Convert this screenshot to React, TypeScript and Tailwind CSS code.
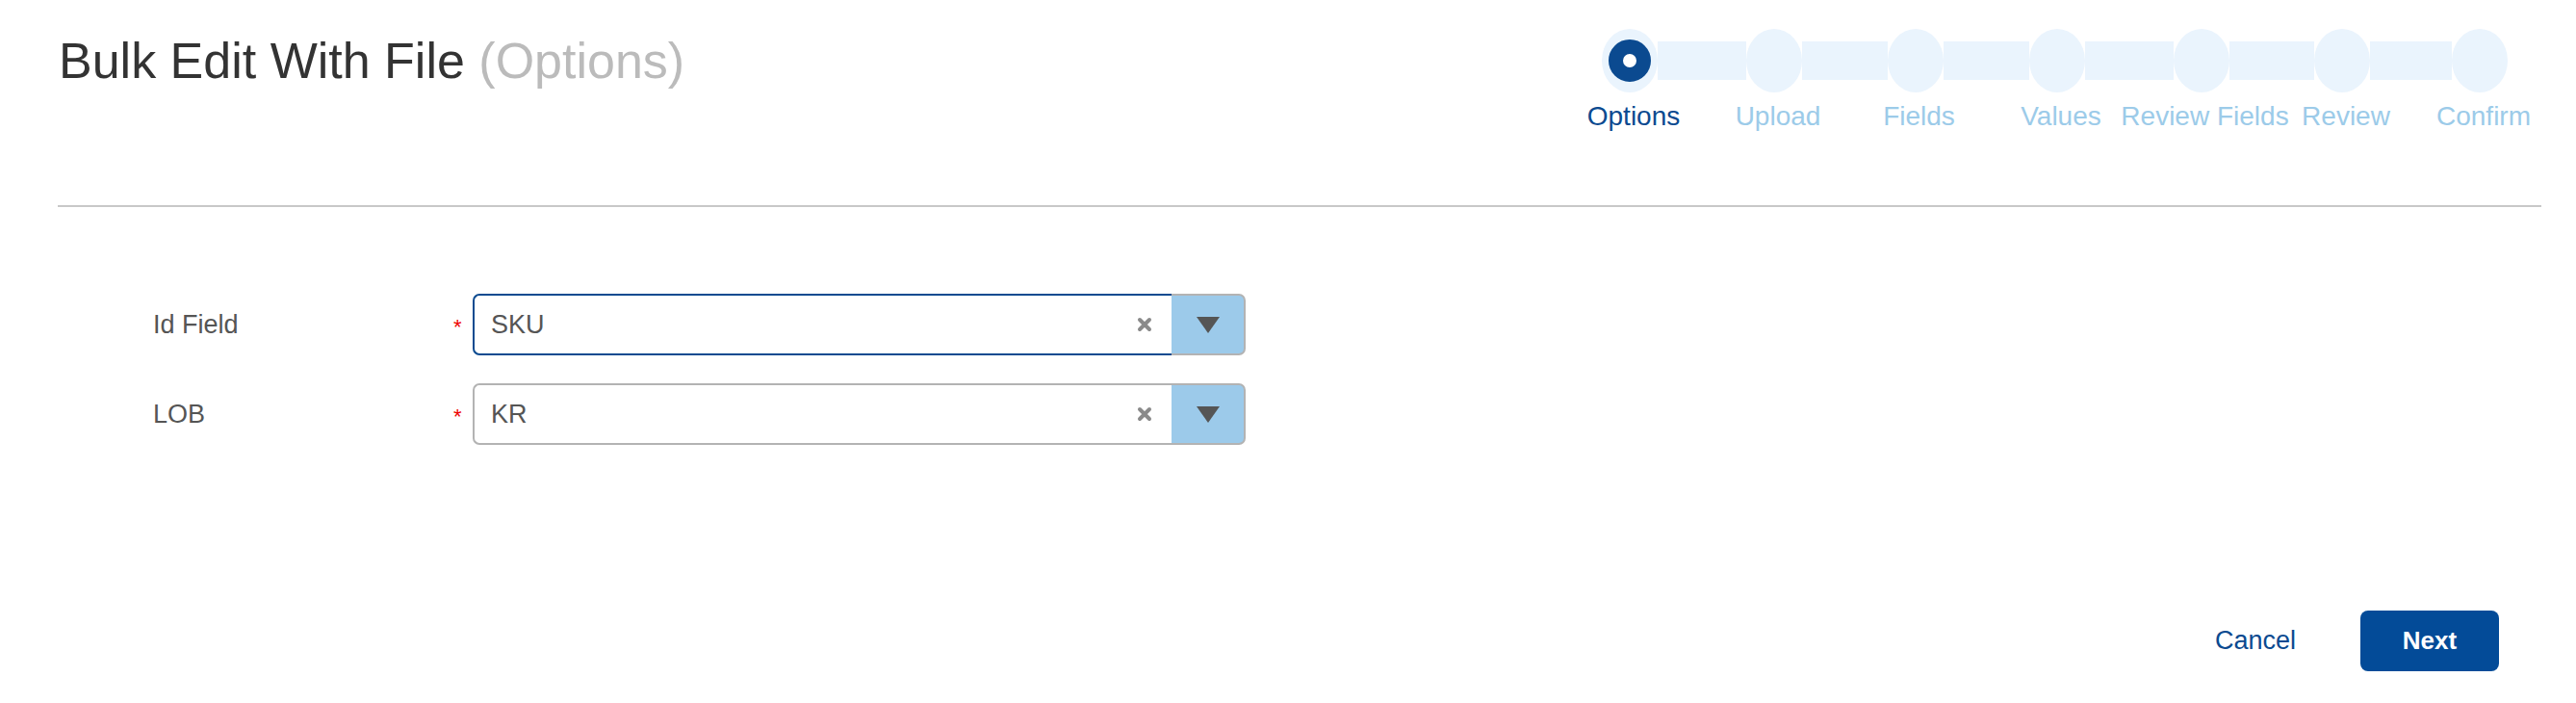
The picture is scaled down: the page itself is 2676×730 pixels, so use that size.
import React from "react";

const steps = [
  { label: "Options", w: 152 },
  { label: "Upload", w: 148 },
  { label: "Fields", w: 145 },
  { label: "Values", w: 150 },
  { label: "Review Fields", w: 149 },
  { label: "Review", w: 144 },
  { label: "Confirm", w: 142 },
];

function Stepper() {
  return (
    <div className="flex mt-[30px]">
      {steps.map((s, i) => (
        <div key={s.label} className="flex flex-col items-center" style={{ width: s.w }}>
          <div className="flex items-center w-full h-[66px]">
            <div className={`flex-1 h-[40px] ${i > 0 ? "bg-[#eaf4fd]" : ""}`} />
            <div className="w-[58px] h-[66px] rounded-[50%] bg-[#eaf4fd] flex items-center justify-center shrink-0">
              {i === 0 && (
                <div className="w-[44px] h-[44px] rounded-full border-[15px] border-[#0b4a90] bg-white shrink-0" />
              )}
            </div>
            <div className={`flex-1 h-[40px] ${i < steps.length - 1 ? "bg-[#eaf4fd]" : ""}`} />
          </div>
          <div
            className={`mt-[9px] ml-[8px] whitespace-nowrap text-[28px] leading-[32px] ${
              i === 0 ? "text-[#0b4a90]" : "text-[#9ccbe9]"
            }`}
          >
            {s.label}
          </div>
        </div>
      ))}
    </div>
  );
}

function ClearIcon() {
  return (
    <svg width="16" height="16" viewBox="0 0 16 16">
      <path d="M3 3 L13 13 M13 3 L3 13" stroke="#8a8a8a" strokeWidth="4" strokeLinecap="round" />
    </svg>
  );
}

function SelectRow({ label, value, focused }: { label: string; value: string; focused?: boolean }) {
  return (
    <div className="flex items-center h-[64px]">
      <div className="w-[312px] text-[27px] text-[#555]">{label}</div>
      <div className="w-[20px] text-[#e00] text-[22px] leading-none pt-[6px]">*</div>
      <div className="flex h-[64px] w-[803px]">
        <div
          className={`flex-1 flex items-center rounded-l-[7px] border-2 border-r-0 bg-white ${
            focused ? "border-[#0b4a90]" : "border-[#b3b3b3]"
          }`}
        >
          <div className="flex-1 pl-[17px] text-[27px] text-[#555]">{value}</div>
          <div className="pr-[20px] flex items-center">
            <ClearIcon />
          </div>
        </div>
        <div className="w-[77px] flex items-center justify-center bg-[#9ccaea] border-2 border-l-0 border-[#b3b3b3] rounded-r-[7px]">
          <svg width="24" height="18" viewBox="0 0 24 18">
            <path d="M0 1 L24 1 L12 18 Z" fill="#555" />
          </svg>
        </div>
      </div>
    </div>
  );
}

export default function App() {
  return (
    <div className="w-[2676px] h-[730px] bg-white font-['Liberation_Sans',Arial,sans-serif]">
      <div className="flex justify-between pl-[61px] pr-[29px] h-[213px]">
        <h1 className="text-[52px] leading-[60px] mt-[33px] text-[#333] whitespace-nowrap">
          Bulk Edit With File <span className="text-[#bbb]">(Options)</span>
        </h1>
        <Stepper />
      </div>
      <div className="ml-[60px] mr-[36px] border-t-2 border-[#c8c8c8]" />
      <div className="pl-[159px] pt-[90px] flex flex-col gap-[29px]">
        <SelectRow label="Id Field" value="SKU" focused />
        <SelectRow label="LOB" value="KR" />
      </div>
      <div className="flex justify-end items-center pr-[80px] mt-[172px] gap-[64px]">
        <button className="text-[27px] text-[#0b4a90] px-[3px]">Cancel</button>
        <button className="w-[144px] h-[63px] rounded-[8px] bg-[#034b98] text-white text-[26px] font-bold">
          Next
        </button>
      </div>
    </div>
  );
}
